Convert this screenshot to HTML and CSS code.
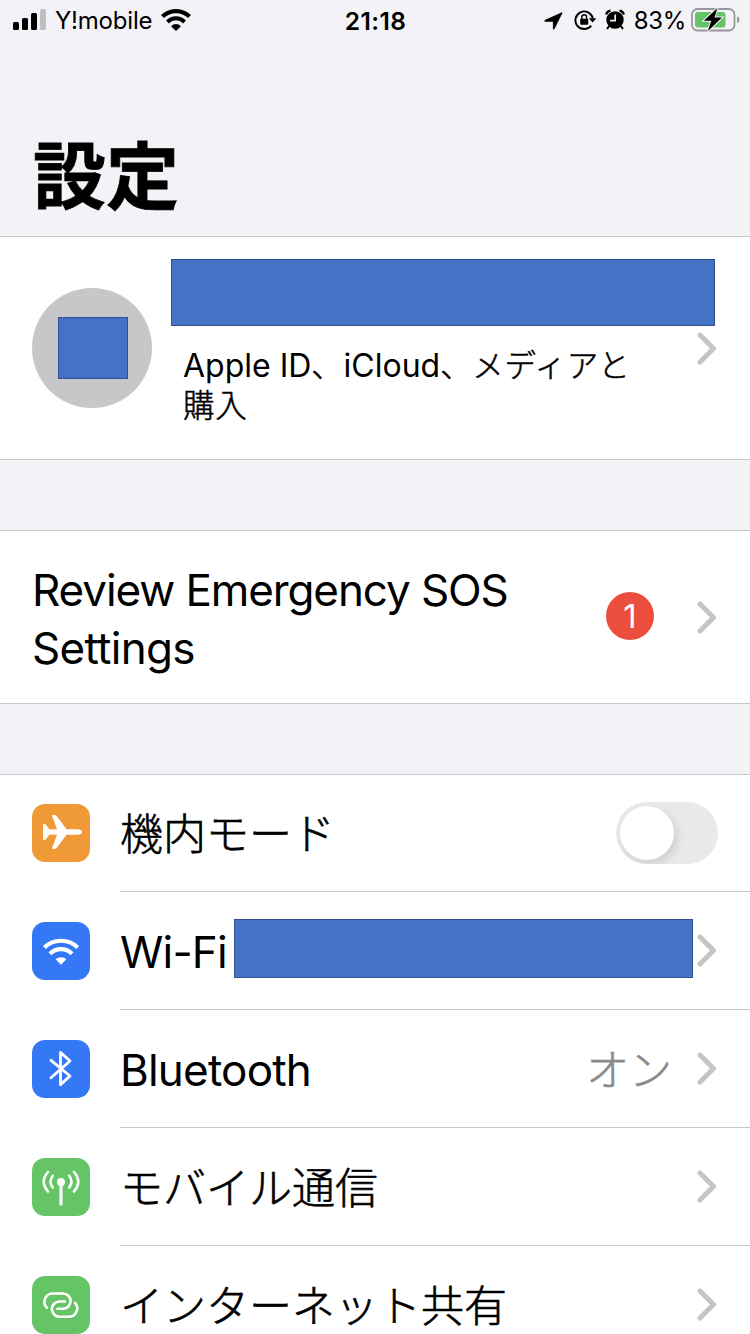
FILE: index.html
```html
<!DOCTYPE html>
<html lang="ja">
<head>
    <meta charset="UTF-8">
    <meta name="viewport" content="width=device-width, initial-scale=1.0">
    <title>設定</title>
    <link rel="stylesheet" href="styles.css">
</head>
<body>
    <div class="statusbar">
        <div class="status-left">
            <svg class="signal" width="34" height="22" viewBox="0 0 34 22">
                <rect x="0" y="13" width="6" height="8" rx="1.5"/>
                <rect x="9" y="9" width="6" height="12" rx="1.5"/>
                <rect x="18" y="4" width="6" height="17" rx="1.5"/>
                <rect x="27" y="0" width="6" height="21" rx="1.5" fill="#bfbfc3"/>
            </svg>
            <span class="carrier">Y!mobile</span>
            <svg class="wifi-status" width="30" height="22" viewBox="0 0 30 22">
                <path d="M1.5 7.6A19.3 19.3 0 0 1 28.5 7.6" fill="none" stroke="#000" stroke-width="4.2"/>
                <path d="M6.4 13A12 12 0 0 1 23.6 13" fill="none" stroke="#000" stroke-width="4"/>
                <path d="M10 17.2A7 7 0 0 1 20 17.2L15 22Z"/>
            </svg>
        </div>
        <div class="clock">21:18</div>
        <div class="status-right">
            <svg class="location" width="19" height="18" viewBox="0 0 19 18">
                <path d="M18 .8 10.2 16.6Q9.4 18 9.4 16.4V9.2H1.7Q-.3 9.2 1.4 8.2Z" stroke="#000" stroke-width="1"/>
            </svg>
            <svg class="lock" width="23" height="22" viewBox="0 0 23 22">
                <path d="M17.2 16.6A8.8 8.8 0 1 1 18.8 9.4" fill="none" stroke="#000" stroke-width="1.9"/>
                <path d="M14.8 9.2H22.4L18.6 13.6Z"/>
                <rect x="6.2" y="9.8" width="8" height="6" rx="1"/>
                <path d="M7.8 10V8.2a2.4 2.4 0 0 1 4.8 0V10" fill="none" stroke="#000" stroke-width="1.4"/>
            </svg>
            <svg class="alarm" width="20" height="22" viewBox="0 0 20 22">
                <circle cx="10" cy="11" r="8.7"/>
                <path d="M1.2 5.5A5 5 0 0 1 5.5 1.6M14.5 1.6A5 5 0 0 1 18.8 5.5" fill="none" stroke="#000" stroke-width="2.4"/>
                <path d="M4.2 17 2 20M15.8 17 18 20" stroke="#000" stroke-width="2"/>
                <path d="M10.2 5.6V11.6H5" fill="none" stroke="#f2f2f7" stroke-width="1.6"/>
            </svg>
            <span class="percent">83%</span>
            <svg class="battery" width="49" height="25" viewBox="0 0 49 25">
                <rect x="1" y="2" width="42.5" height="21.5" rx="5.5" fill="none" stroke="#98989c" stroke-width="1.8"/>
                <path d="M46 9.5Q48.6 10 48.6 12.7T46 16Z" fill="#98989c"/>
                <rect x="4" y="5" width="30.5" height="15.5" rx="3" fill="#65c466"/>
                <path d="M26.500 1 12.800 13.800H20.300L16.800 24.200 31 10.400H23.500Z" stroke="#f2f2f7" stroke-width="2" paint-order="stroke"/>
            </svg>
        </div>
    </div>

    <h1 class="title">設定</h1>

    <div class="group profile">
        <div class="avatar"><div class="mask mask-avatar"></div></div>
        <div class="profile-text">
            <div class="mask mask-name"></div>
            <div class="profile-desc"><span class="latin">Apple ID</span>、<span class="latin">iCloud</span>、メディアと</div>
            <div class="profile-desc">購入</div>
        </div>
        <svg class="chevron" width="20" height="33" viewBox="0 0 20 33"><path d="M3 3 16.5 16.5 3 30"/></svg>
    </div>

    <div class="group sos">
        <div class="sos-text"><span class="sos-first">Review Emergency SOS</span><br>Settings</div>
        <span class="badge">1</span>
        <svg class="chevron" width="20" height="33" viewBox="0 0 20 33"><path d="M3 3 16.5 16.5 3 30"/></svg>
    </div>

    <div class="group list">
        <div class="row">
            <svg class="icon orange" width="58" height="58" viewBox="0 0 58 58">
                <path d="M50 28c0-1.700-2-2.800-5-2.800H34.600L24.700 12.200c-.7-.9-1.200-1.200-2-1.200h-1.600c-.8 0-1.100.6-.8 1.400l4.700 12.800-7.600.4-3.500-5c-.4-.5-.8-.7-1.300-.7h-.8c-.5 0-.8.3-.8.9v14.400c0 .6.3.9.8.9h.8c.5 0 .9-.2 1.300-.7l3.500-5 7.600.4-4.700 12.800c-.3.8 0 1.400.8 1.400h1.600c.8 0 1.300-.3 2-1.200l9.900-13H45c3 0 5-1.100 5-2.800Z" fill="#fff"/>
            </svg>
            <div class="row-body">
                <span class="label">機内モード</span>
                <span class="switch"><span class="knob"></span></span>
            </div>
        </div>
        <div class="row">
            <svg class="icon blue" width="58" height="58" viewBox="0 0 58 58">
                <path d="M12.3 25.5A24 24 0 0 1 45.700 25.500" fill="none" stroke="#fff" stroke-width="4.2"/>
                <path d="M18 31.8A15.2 15.2 0 0 1 40 31.8" fill="none" stroke="#fff" stroke-width="4.2"/>
                <path d="M23.6 37.3A8 8 0 0 1 34.4 37.3L29 42.7Z" fill="#fff"/>
            </svg>
            <div class="row-body">
                <span class="label latin wifi-label">Wi-Fi</span>
                <div class="mask mask-wifi"></div>
                <svg class="chevron" width="20" height="33" viewBox="0 0 20 33"><path d="M3 3 16.5 16.5 3 30"/></svg>
            </div>
        </div>
        <div class="row">
            <svg class="icon blue" width="58" height="58" viewBox="0 0 58 58">
                <path d="M19 20.3 38 36 28.5 44.600V12.400L38 21 19 37.800" fill="none" stroke="#fff" stroke-width="2.8" stroke-linecap="round" stroke-linejoin="round"/>
            </svg>
            <div class="row-body">
                <span class="label latin bt-label">Bluetooth</span>
                <span class="value">オン</span>
                <svg class="chevron" width="20" height="33" viewBox="0 0 20 33"><path d="M3 3 16.5 16.5 3 30"/></svg>
            </div>
        </div>
        <div class="row">
            <svg class="icon green" width="58" height="58" viewBox="0 0 58 58">
                <g fill="none" stroke="#fff" stroke-width="2.6" stroke-linecap="round">
                    <path d="M16 14Q7.500 23.500 16 33.500M20.800 17.700Q16.200 23.500 20.800 29.500M42 14Q50.500 23.500 42 33.500M37.200 17.700Q41.800 23.500 37.200 29.500"/>
                    <path d="M29 24V46" stroke-width="3.2"/>
                </g>
                <circle cx="29" cy="24" r="4" fill="#fff"/>
            </svg>
            <div class="row-body">
                <span class="label">モバイル通信</span>
                <svg class="chevron" width="20" height="33" viewBox="0 0 20 33"><path d="M3 3 16.5 16.5 3 30"/></svg>
            </div>
        </div>
        <div class="row">
            <svg class="icon green" width="58" height="58" viewBox="0 0 58 58">
                <g fill="none" stroke="#fff" stroke-width="2.6" stroke-linecap="round" stroke-linejoin="round">
                    <path d="M15 31.800A8.300 8.300 0 0 1 20.500 17.500H31A7.600 7.600 0 0 1 31 32.700H25.500"/>
                    <path d="M33 25.500H27.500A7.600 7.600 0 0 0 27.500 40.700H37.500A8.300 8.300 0 0 0 43 26.800"/>
                </g>
            </svg>
            <div class="row-body">
                <span class="label">インターネット共有</span>
                <svg class="chevron" width="20" height="33" viewBox="0 0 20 33"><path d="M3 3 16.5 16.5 3 30"/></svg>
            </div>
        </div>
    </div>
</body>
</html>
```
FILE: styles.css
```css
* {
    box-sizing: border-box;
}
body {
    margin: 0;
    height: 1334px;
    overflow: hidden;
    background-color: #f2f2f7;
    color: #000;
    font-family: Inter, "Noto Sans CJK JP", sans-serif;
}
svg {
    display: block;
    flex-shrink: 0;
}

/* barra de estado */
.statusbar {
    display: grid;
    grid-template-columns: 1fr auto 1fr;
    height: 40px;
    padding: 0 10px 0 13px;
    align-items: center;
    font-size: 24px;
    line-height: 38px;
}
.status-left, .status-right {
    display: flex;
    align-items: center;
}
.status-right {
    justify-content: flex-end;
}
.carrier {
    margin-left: 8px;
    padding-top: 2px;
    letter-spacing: -0.2px;
}
.wifi-status {
    margin-left: 9px;
}
.clock {
    padding-top: 1px;
    margin-left: -2px;
    font-size: 24.5px;
    font-weight: 600;
    letter-spacing: 0.4px;
}
.location {
    margin-top: 1px;
}
.lock {
    margin-left: 11px;
}
.alarm {
    margin-left: 8px;
}
.percent {
    margin-left: 9px;
    padding-top: 2px;
    letter-spacing: -0.3px;
}
.battery {
    margin-left: 5px;
    margin-top: -1px;
}

.title {
    margin: 0;
    height: 196px;
    padding: 76px 33px 0;
    font-family: "Noto Sans CJK JP", sans-serif;
    font-size: 73px;
    line-height: 110px;
    font-weight: 700;
    -webkit-text-stroke: 0.8px #000;
}

.group {
    background-color: #fff;
    border-top: 1px solid #c6c6c8;
    border-bottom: 1px solid #c6c6c8;
    margin-bottom: 70px;
}
.chevron {
    margin-left: auto;
    fill: none;
    stroke: #c5c5c7;
    stroke-width: 5;
    stroke-linecap: round;
    stroke-linejoin: round;
}
.mask {
    background-color: #4472c4;
    border: 1px solid #2f528f;
}

/* perfil */
.profile {
    display: flex;
    align-items: center;
    height: 224px;
    padding: 0 32px;
}
.avatar {
    display: flex;
    width: 120px;
    height: 120px;
    border-radius: 50%;
    background-color: #c7c7c9;
    padding: 29px 0 0 26px;
}
.mask-avatar {
    width: 70px;
    height: 62px;
}
.profile-text {
    align-self: flex-start;
    width: 544px;
    margin: 22px 0 0 19px;
}
.mask-name {
    height: 67px;
    margin-bottom: 17px;
}
.profile-desc {
    margin-left: 12px;
    font-family: "Noto Sans CJK JP", sans-serif;
    font-weight: 300;
    font-size: 31.5px;
    line-height: 40px;
    letter-spacing: 0.7px;
    white-space: nowrap;
    -webkit-text-stroke: 0.5px #000;
}
.latin {
    font-family: Inter, sans-serif;
    font-weight: 400;
    -webkit-text-stroke: 0;
}
.profile-desc .latin {
    font-size: 32px;
    letter-spacing: 0;
    line-height: 1;
}
.profile .chevron {
    margin-left: -18px;
}

/* aviso SOS */
.sos {
    display: flex;
    align-items: center;
    height: 174px;
    padding: 0 33px 0 32px;
}
.sos-text {
    flex: 1;
    padding-top: 4px;
    font-size: 44px;
    line-height: 58px;
    letter-spacing: -0.7px;
}
.sos-first {
    letter-spacing: -1.1px;
}
.badge {
    width: 48px;
    height: 48px;
    margin-top: -2px;
    border-radius: 50%;
    background-color: #eb4e3d;
    color: #fff;
    font-size: 33px;
    line-height: 48px;
    text-align: center;
}
.sos .chevron {
    margin-left: 43px;
}

/* lista */
.list {
    padding-left: 32px;
    margin-bottom: 0;
}
.row {
    display: flex;
    align-items: center;
    height: 118px;
}
.row:first-child {
    margin-top: -1px;
}
.icon {
    border-radius: 13px;
}
.orange {
    background-color: #f09a37;
}
.blue {
    background-color: #3478f6;
}
.green {
    background-color: #65c466;
}
.row-body {
    display: flex;
    flex: 1;
    align-items: center;
    height: 118px;
    margin-left: 30px;
    padding-right: 33px;
    border-bottom: 1px solid #c6c6c8;
}
.label {
    padding-bottom: 3px;
    font-family: "Noto Sans CJK JP", sans-serif;
    font-weight: 300;
    font-size: 43px;
    white-space: nowrap;
    -webkit-text-stroke: 0.6px #000;
}
.label.latin {
    padding: 3px 0 0;
    font-family: Inter, sans-serif;
    font-weight: 400;
    font-size: 44px;
    letter-spacing: -0.8px;
    -webkit-text-stroke: 0;
}
.wifi-label {
    width: 114px;
}
.mask-wifi {
    width: 459px;
    height: 59px;
    margin-bottom: 5px;
}
.value {
    margin-left: auto;
    padding-bottom: 4px;
    font-family: "Noto Sans CJK JP", sans-serif;
    font-weight: 300;
    font-size: 43px;
    color: #8a8a8e;
    -webkit-text-stroke: 0.6px #8a8a8e;
}
.value + .chevron {
    margin-left: 25px;
}
.switch {
    width: 102px;
    height: 62px;
    margin-left: auto;
    margin-right: -1px;
    padding: 4px;
    border-radius: 31px;
    background-color: #e9e9eb;
    overflow: hidden;
}
.knob {
    display: block;
    width: 54px;
    height: 54px;
    border-radius: 50%;
    background-color: #fff;
    box-shadow: 3px 4px 10px rgba(0,0,0,0.12);
}
```
